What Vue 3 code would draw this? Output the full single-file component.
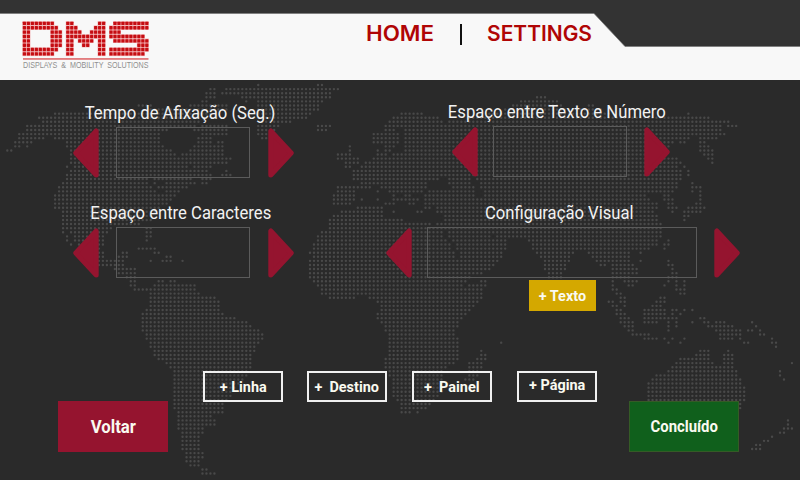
<script setup>
// Each row lists the horizontal stretches of land, in pixels.
const landRows = `259 318-323
211-215 227-338
207-215 223-330
207-215 241-328 537-545
203-207 247 259-322 520-555
138-152 190-226 258-318 513-560 588-594
150-226 258-318 505-600
56-210 258-310 402-422 490-610 688
40-200 258-307 394-438 470-709
43-200 262-291 390-440 450-728
27-195 203-227 258-277 318-330 387-397 402-720 730-737
27-168 195-227 258-275 318-326 385-392 405-720
19-157 203-225 258-275 374-397 405-723
19-44 56-157 197-211 262-266 374-397 405-690 701-715
15-33 68-160 197-211 219-223 374-397 405-673 680-685 701-705
15-19 27 68-162 193-224 350 386-394 405-668 701-709
7-11 70-172 190-224 350 379 386-390 405-665 701-712
72-175 182-224 339-351 379-386 394-665 705-712
72-178 183-232 339-357 374-677 709-712
72-228 347-359 366-681 712
68 76-185 193-211 347-350 362-677 684
72-200 203-208 226 354-681 688
68-200 203-211 222-230 354-681 688
68-145 153-190 203-211 354-428 433-438 448-468 477-681
64-145 155 165-195 203-207 362-426 450-471 480-677 692
60-150 160-187 338-358 362-371 382-425 452-475 481-677 692 696-700
60-155 165-180 338-354 378 390-423 430-443 447-475 485-673 692 700
56-176 335-354 394 405-408 425-475 485-645 665-669 700
56-170 335-354 362 378 393-410 415-418 424-480 485-650 665-673 700
56-165 335-350 387-395 411-413 425-655 669-673 697-700
56-160 358-382 425-430 438-655 669-677 688-705
64-155 342-382 393 418-421 437-652 673 685-700
64-150 335-382 445-657 685-689
64-150 331-400 445-657 685
64-140 331-405 410-430 437-661
64-68 72-110 147-151 330-428 432-661
64 72-108 147-151 322-442 448-661
68 76-104 147-151 318-443 450-490 497-661
68 76-104 147 318-446 453-505 528-657 669
72 80-104 314-448 456-504 532-657 665-669
80-100 139-155 314-450 458-506 534-649 665
100-104 123-127 155-159 311-453 461-503 537 542-572 590-629 641
100-104 119-127 167-171 314-455 461-500 543-570 592-629
88-124 151 163-171 183 311-458 463-497 544-567 595-629 641 669
100-124 311-461 465-492 545-565 600-605 613-633 669-673
115-135 311-463 467-490 546-563 613-637 673
119-135 311-465 468-480 547-562 613-637 673-677
127-135 311-468 549-560 613-629 669-677
131-135 159-163 172-176 314-467 480-486 613 625-637 669 677 685
131-135 155-193 318-460 468-486 613 629-633 665 677 685
135-195 322-483 613-617 677-685
151-199 322-481 617-621 681-685
151-215 330-355 370-481 621-625 661-665
151-219 378-478 609-613 621-625 657-665
151-219 382-474 613-617 625 653-661
147-219 382-470 617-621 645-665 673-677 685 693
143-223 378-467 617-625 645-665 673 681
143-235 378-463 621-629 645-665 669-677 700-704
143-247 382-459 621-633 645-657 669 677 693 704-708 716-724 752
143-251 386-458 625-633 669 677 708-732 756
143-259 386-455 629-633 669 716-741 748-752 760
147-263 390-455 633-650 720-741 760-764
147-263 390-458 645-657 665 673 685 720-733 741 772
151-259 390-458 502 669 681 745-749 772-776
151-255 390-458 776
155-255 390-458 482 701-709 729
155-251 390-458 482-486 697-709 725-733
159-251 386-458 478-486 681-709 725-733
167-251 386-455 470-482 677-713 725-733 792
171-251 386-447 470-482 673-733
175-247 390-443 470-478 669-737 780
175-247 390-443 470-478 657-737 780
175-243 394-443 466-474 653-741 784
175-239 394-443 649-741
175-235 394-440 649-745
175-231 394-440 649-745
175-231 394-436 649-745
175-227 398-433 649-745
175-223 402-430 649-741
175-223 402-426 741
179-223 402-410 418
179-211
179-215 788
179-215 788
179-203 784-792
183-203 780-784
183-199 772
183-199 764-768
183-199 756-760
183-199 752-760
187-203
187-203
187-199
191-199
203-207
203-215`.split('\n')

const mapPath = landRows.map((row, r) => {
  const y = (85 + r * 4.09 - 80).toFixed(2)
  const seen = new Set()
  let d = ''
  for (const part of row.trim().split(' ')) {
    if (!part) continue
    const [a, b = a] = part.split('-').map(Number)
    const from = Math.round((a - 7.3) / 3.983)
    const to = Math.round((b - 7.3) / 3.983)
    for (let c = from; c <= to; c++) {
      if (seen.has(c)) continue
      seen.add(c)
      d += `M${(7.3 + c * 3.983).toFixed(2)} ${y}h.01`
    }
  }
  return d
}).join('')

const letters = [
  { x: 24.4, rows: ['11111111..', '111111111.', '11.....111', '11.....111', '11.....111', '11.....111', '111111111.', '11111111..'] },
  { x: 67.8, rows: ['11......11', '111....111', '1111..1111', '1111111111', '11.1111.11', '11..11..11', '11......11', '11......11'] },
  { x: 111, rows: ['.111111111', '1111111111', '111.......', '111111111.', '.111111111', '.......111', '1111111111', '111111111.'] },
]
const logoDots = letters.flatMap(({ x, rows }) =>
  rows.flatMap((row, r) => [...row].flatMap((v, c) => (v === '1' ? [{ x: x + c * 3.98 - 1.6, y: 21.7 + r * 4.36 }] : []))))

const left = [
  { label: 'Tempo de Afixação (Seg.)', cls: 'tempo' },
  { label: 'Espaço entre Caracteres', cls: 'caracteres' },
]
const right = [
  { label: 'Espaço entre Texto e Número', cls: 'numero' },
  { label: 'Configuração Visual', cls: 'visual' },
]
const actions = [
  { text: '+ Linha', cls: 'linha' },
  { text: '+  Destino', cls: 'destino' },
  { text: '+  Painel', cls: 'painel' },
  { text: '+ Página', cls: 'pagina' },
]
</script>

<template>
  <div class="screen">
    <header class="header">
      <svg class="header-shape" width="800" height="80" viewBox="0 0 800 80">
        <path d="M0 13.5H594L625 46.5H800V80H0Z" fill="#f8f8f8" />
        <path d="M0 13.5H594L625 46.5H800" fill="none" stroke="#777" stroke-width=".7" />
      </svg>
      <svg class="logo" width="220" height="80" viewBox="0 0 220 80">
        <rect v-for="(d, i) in logoDots" :key="'h' + i" :x="d.x - 0.4" :y="d.y - 0.5" width="4" height="4.36" fill="#efa3a5" />
        <rect v-for="(d, i) in logoDots" :key="i" :x="d.x" :y="d.y" width="3.2" height="3.4" rx=".6" fill="#c50d12" />
        <rect x="23" y="58.3" width="125.5" height="1.3" fill="#d9484b" />
        <text x="23" y="68" textLength="125.5" lengthAdjust="spacingAndGlyphs" class="tagline">DISPLAYS &nbsp;&amp; &nbsp;MOBILITY &nbsp;SOLUTIONS</text>
      </svg>
      <nav class="nav">
        <svg width="70" height="30"><text x="0" y="22" textLength="68" lengthAdjust="spacingAndGlyphs">HOME</text></svg>
        <span class="divider"></span>
        <svg width="110" height="30"><text x="0" y="22" textLength="105" lengthAdjust="spacingAndGlyphs">SETTINGS</text></svg>
      </nav>
    </header>

    <main class="main">
      <svg class="map" width="800" height="400" viewBox="0 0 800 400"><path :d="mapPath" /></svg>
      <div class="fields">
        <section class="column left">
          <div v-for="f in left" :key="f.cls" class="field" :class="f.cls">
            <div class="label"><span>{{ f.label }}</span></div>
            <div class="picker">
              <svg class="arrow" width="26" height="50" viewBox="0 0 26 50"><path d="M2.8 25L23.2 3V47Z" /></svg>
              <div class="box"></div>
              <svg class="arrow" width="26" height="50" viewBox="0 0 26 50"><path d="M23.2 25L2.8 3V47Z" /></svg>
            </div>
          </div>
        </section>
        <section class="column right">
          <div v-for="f in right" :key="f.cls" class="field" :class="f.cls">
            <div class="label"><span>{{ f.label }}</span></div>
            <div class="picker">
              <svg class="arrow" width="26" height="50" viewBox="0 0 26 50"><path d="M2.8 25L23.2 3V47Z" /></svg>
              <div class="box"></div>
              <svg class="arrow" width="26" height="50" viewBox="0 0 26 50"><path d="M23.2 25L2.8 3V47Z" /></svg>
            </div>
          </div>
          <button class="texto"><span>+ Texto</span></button>
        </section>
      </div>
      <div class="actions">
        <button v-for="a in actions" :key="a.cls" class="action" :class="a.cls"><span>{{ a.text }}</span></button>
      </div>
      <footer class="footer">
        <button class="voltar"><span>Voltar</span></button>
        <button class="concluido"><span>Concluído</span></button>
      </footer>
    </main>
  </div>
</template>

<style>
body { background: #2a2a2a; overflow: hidden; }
</style>

<style scoped>
.screen { width: 800px; height: 480px; font-family: Roboto, sans-serif; background: #2a2a2a; color: #fff; overflow: hidden; }
svg { display: block; flex: none; }
.header { position: relative; height: 80px; display: flex; background: #333; }
.header-shape { position: absolute; inset: 0; }
.logo { position: relative; }
.tagline { font: 8.2px "Liberation Sans", sans-serif; fill: #8f8f8f; }
.nav { position: relative; display: flex; height: 30px; margin: 19px 0 0 146px; }
.nav text { font: 600 21px Inter, sans-serif; fill: #b00505; }
.divider { width: 2px; height: 21px; margin: 5px 25px 0 24px; background: #111; }
.main { position: relative; height: 400px; }
.map { position: absolute; inset: 0; }
.map path { stroke: #494949; stroke-width: 2.4; stroke-linecap: round; }
.fields { position: relative; display: flex; height: 230px; padding-top: 22px; box-sizing: border-box; }
.column { display: flex; flex-direction: column; }
.left { width: 221px; margin-left: 73px; }
.right { width: 354px; margin-left: 92px; }
.field { height: 100px; flex: none; }
.label { height: 22px; margin-bottom: 3px; display: flex; justify-content: center; white-space: nowrap; font-size: 18px; line-height: 22px; color: #f2f2f2; }
.label span { transform: scaleX(.925); }
.picker { display: flex; align-items: center; justify-content: space-between; height: 51px; }
.arrow path { fill: #95142f; stroke: #95142f; stroke-width: 5; stroke-linejoin: round; }
.box { width: 134px; height: 51px; margin: 0 1px 0 -1px; box-sizing: border-box; border: 1px solid #5b5b5b; }
.tempo .label, .caracteres .label { padding-right: 6px; }
.numero { margin-top: -1px; height: 101px; }
.numero .label { padding-right: 12px; }
.numero .picker { width: 218px; margin-left: 66px; }
.visual .label { padding-right: 8px; }
.visual .box { width: 270px; }
button { display: flex; align-items: center; justify-content: center; padding: 0; box-sizing: border-box; font: 700 15.5px Roboto, sans-serif; color: #fafaf0; white-space: pre; border: 0; }
button span { transform: scaleX(.93); }
.texto { width: 67px; height: 31px; margin: -22px 0 0 143px; background: #d4a800; flex: none; }
.actions { position: relative; display: flex; gap: 24px; margin: 61px 0 0 203px; height: 31px; }
.action { width: 80px; height: 31px; border: 2px solid #f0f0f0; background: transparent; }
.painel, .pagina { margin-left: 1px; }
.pagina span { margin-top: -3px; }
.footer { position: relative; display: flex; justify-content: space-between; margin: -1px 61px 0 58px; }
.voltar, .concluido { width: 110px; height: 51px; }
.voltar { background: #95142f; font-size: 18px; }
.concluido { background: #10601c; border: 1px solid #355b26; font-size: 16px; }
</style>
